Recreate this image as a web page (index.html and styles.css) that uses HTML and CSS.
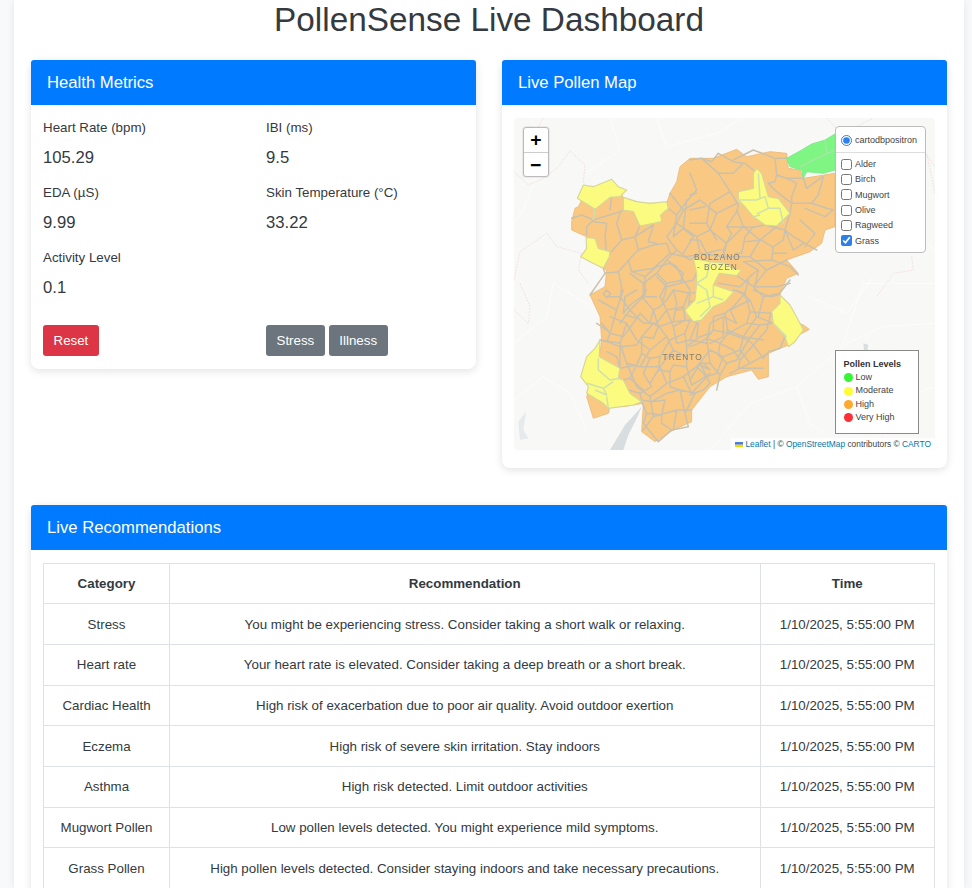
FILE: index.html
```html
<!DOCTYPE html>
<html lang="en">
<head>
<meta charset="utf-8">
<title>PollenSense Live Dashboard</title>
<link rel="stylesheet" href="styles.css">
</head>
<body>
<main class="page">
  <h1 class="title">PollenSense Live Dashboard</h1>
  <div class="top-row">
    <section class="card">
      <h2 class="card-header">Health Metrics</h2>
      <div class="metrics-body">
        <div class="metrics">
          <div class="metric"><div class="metric-label">Heart Rate (bpm)</div><div class="metric-value">105.29</div></div>
          <div class="metric"><div class="metric-label">IBI (ms)</div><div class="metric-value">9.5</div></div>
          <div class="metric"><div class="metric-label">EDA (µS)</div><div class="metric-value">9.99</div></div>
          <div class="metric"><div class="metric-label">Skin Temperature (°C)</div><div class="metric-value">33.22</div></div>
          <div class="metric"><div class="metric-label">Activity Level</div><div class="metric-value">0.1</div></div>
        </div>
        <div class="actions">
          <div><button class="btn btn-red" type="button">Reset</button></div>
          <div class="btn-group"><button class="btn btn-gray" type="button">Stress</button><button class="btn btn-gray" type="button">Illness</button></div>
        </div>
      </div>
    </section>
    <section class="card">
      <h2 class="card-header">Live Pollen Map</h2>
      <div class="map-body">
        <div class="map">
          <svg class="map-svg" viewBox="12 24 1263 996" aria-hidden="true">
            <g class="base-line">
              <path d="M60 24L110 120L40 300L12 340M230 190L330 120L300 24M440 24L470 110L620 70L700 24M12 700L110 620L130 520L260 600M12 870L100 800L180 850L230 960M600 1020L720 880L860 830L1010 700L1120 650L1275 640M860 830L900 940L1010 1020M1000 700L1060 520L1275 520M900 560L1010 610L1090 500M1130 1020L1120 880L1275 830M1060 230L1275 420"/>
            </g>
            <path class="water" d="M300 1020L345 945L395 890L385 915L355 975L340 1020Z M1060 700L1075 705L1072 722L1062 720Z"/>
            <path class="water-pale" d="M25 935L48 905L40 960L55 985L30 990Z"/>
            <g class="pink-line">
              <path d="M12 185L55 225L100 205L145 170L180 123L225 165L220 215L240 250M100 24L85 50M12 510L30 425L110 370L140 410L215 430L205 480L235 520M12 600L55 640L60 590L30 520M950 24L985 60L1040 50L1090 24M1275 170L1240 120L1200 95M1205 440L1210 480L1150 490L1100 560M1275 250L1250 130"/>
            </g>
            <path class="orange" d="M185 335L195 295L205 290L225 250L300 240L330 240L340 265L400 280L470 280L480 250L500 215L510 170L540 145L610 145L680 118L710 140L780 125L830 130L835 175L870 180L880 205L975 190L975 350L945 360L935 400L900 425L830 450L865 490L830 505L810 550L815 590L840 630L880 645L898 658L880 668L855 680L835 705L775 730L775 800L745 808L725 780L650 800L600 830L545 900L545 935L490 960L435 995L395 965L400 880L340 890L300 890L295 910L250 925L230 860L240 830L240 800L270 730L275 690L270 620L240 555L285 530L290 480L270 470L230 440L240 400L230 380L185 360Z"/>
            <g class="district">
              <g transform="translate(180 90)">
                <path d="M75 208L70 240L50 260L50 285M5 235L35 225L70 240L150 215L160 210M125 170L120 210M70 245L110 250L105 290L110 340M150 220L140 250L155 300L120 340M190 215L210 258L195 290L205 330M155 300L195 290L250 255L235 305L260 310M120 340L100 385L105 400L145 395L185 350L205 330L250 315L290 310L300 340L250 385L185 395L175 360M145 395L155 440L150 480M105 400L60 465M295 205L320 225L345 190L380 150L360 100M320 225L310 290L340 265L370 290L340 340M340 265L350 180M300 340L345 350L380 345M185 395L225 410L260 380L300 370L340 400L330 430L290 440L260 410M225 410L225 470M280 480L290 440M330 430L370 420L385 385M100 462L110 450L122 462L110 473Z"/>
              </g>
              <g transform="translate(540 90)">
                <path d="M0 60L35 55L85 100L120 155L60 190L50 250L80 300M120 155L145 195L140 215L110 260L125 280L100 330L105 350M35 55L65 65L85 40L130 65L160 70L130 100L85 100M130 60L190 30L255 55L260 105L290 115L320 130L305 170L305 190L260 155L235 130L255 125L260 105M190 90L165 70M260 55L290 55M290 115L340 115L350 145L390 115L400 110L385 165L365 190L305 190L300 220L285 270L310 290L380 330M345 205L405 230L430 210L410 205L365 190M330 240L375 280L345 320M285 270L310 330L340 310M190 260L165 290L155 340L135 340M110 260L190 262L225 255L285 270L280 300L250 320L245 360L160 365M165 305L215 300L245 320M250 340L290 340M245 360L300 380L325 405M205 390L195 440L260 440L300 430M85 430L150 440L185 405L205 390L160 365M0 165L20 160M0 250L50 250M0 210L45 200M0 300L30 300L50 340L85 330L100 330"/>
              </g>
              <g transform="translate(180 540)">
                <path d="M85 30L140 60L160 0M140 60L120 130L160 140L200 85L165 75M200 85L210 70L240 100L250 60L215 20L180 45L160 70M95 100L120 130L110 155L90 150M110 155L150 170L200 165L215 140L250 145L265 110L250 100L215 140M265 110L310 95L320 40L310 0L360 10L355 55L320 60M310 95L360 90L345 130L300 150L270 200L240 205L215 190L215 140M240 205L220 250L245 290L210 310L215 330L245 335L290 310L330 300L375 310L345 370L355 410L305 420L265 455L220 400L230 370L215 335M230 370L275 375L285 330L245 335M275 375L275 400L305 420M330 300L345 370M270 200L265 240L300 245L300 290L330 300M265 240L240 280M300 245L310 225L350 230L365 285L390 270L420 250M350 230L350 170L345 130M350 170L390 140L420 130M360 90L385 100L380 140M150 170L150 235L200 225L180 265L220 300M200 225L215 190M150 235L140 200L110 185M160 270L180 265M175 300L210 310M390 225L420 240L400 220M310 0L290 30L270 50L250 60M215 20L230 0M360 10L420 0M265 110L250 60M160 70L165 20L200 0"/>
              </g>
              <g transform="translate(540 510)">
                <path d="M0 65L90 55L130 30L165 40L175 0M165 40L180 95L245 100M180 95L170 130L115 160L105 100L130 80L165 40M105 100L70 110L70 150L115 160M170 130L210 135L175 180L115 160L90 190L50 175L70 150M245 130L210 135M260 130L285 170L270 205L235 215M175 180L190 195L150 240L130 210L90 190M175 180L140 240L110 250L85 225L90 190M110 250L90 285L60 250L50 175M150 240L145 265M50 175L25 190L0 200M60 250L30 250L60 310M30 250L0 300M90 285L80 330M190 195L220 235L235 215M190 195L230 150L240 110L245 100M190 30L240 50L265 45L300 0M0 345L40 330L60 310M145 265L220 265"/>
              </g>
              <path d="M440 490L470 520L450 560L470 600L440 640M470 520L520 510L540 540L520 590L470 600M520 510L500 470L470 450L440 490L400 520L400 560L440 560M400 520L360 490M400 560L360 600L400 640L440 640L470 680M360 600L330 560L290 560M330 640L360 600M520 590L525 630L490 650L470 600M490 650L500 700L540 690L560 640M540 690L590 700L600 640M600 640L640 620L680 640L660 600L720 570L740 620L700 680L650 660M640 620L640 680L600 700M720 570L680 540M740 620L790 640M700 680L760 690"/>
              <path d="M480 250L520 300L500 340L470 380L500 420L470 450M520 300L570 270L620 310L600 360L560 380L500 340M560 380L570 430L540 450L500 420M600 360L650 400L640 440L570 430M620 310L680 280M650 400L700 350L680 300M700 350L750 390L720 440L640 440M750 390L800 350M720 440L770 480L730 530L680 497M770 480L830 450M730 530L760 560L810 550M760 560L745 620"/>
              <path d="M300 620L350 640L330 700L270 690M290 660L260 640M330 700L350 760L390 770L420 720L380 690L350 640M420 720L470 680L490 720L450 770L390 770M450 770L470 820L420 860L380 830L350 760M470 820L520 800L560 770L590 800L545 850L520 800M490 720L530 740M560 770L600 720L640 740L620 790L590 800M640 740L690 720L720 760L660 790M690 720L700 680M720 760L775 730M420 860L430 920L500 900L545 900M430 920L400 960M500 900L490 960"/>
            </g>
            <path class="yellow" d="M202 265L220 225L250 230L305 208L325 230L350 240L330 260L300 262L255 298L235 285Z"/>
            <path class="yellow" d="M340 262L380 275L420 280L470 275L475 295L452 315L455 335L390 348L370 305L340 300Z"/>
            <path class="yellow" d="M228 382L255 385L265 415L300 425L298 440L280 475L240 455L212 440L230 415Z"/>
            <path class="yellow" d="M730 190L740 175L755 190L775 260L805 265L840 310L800 348L765 345L730 320L700 285L685 270L685 245L730 235Z"/>
            <path class="yellow" d="M550 445L600 455L650 460L665 475L695 480L680 497L628 490L610 525L672 545L645 575L610 590L575 630L550 635L530 610L525 600L555 570L560 520L560 490Z"/>
            <path class="yellow" d="M810 555L840 585L870 640L880 660L855 695L835 710L825 680L790 640L785 605L810 580Z"/>
            <path class="yellow" d="M270 690L268 740L330 775L325 805L340 810L360 850L395 875L370 885L295 895L280 880L230 850L235 830L212 800L230 740L255 715Z"/>
            <path class="green" d="M830 145L875 120L905 102L945 90L975 72L975 180L940 190L890 185L880 205L875 180L840 170Z"/>
            <g class="green-line">
              <path d="M870 170L920 145L975 120M945 90L950 130"/>
            </g>
            <g class="yellow-line">
              <path d="M685 270L740 270L765 260L775 295L740 312M775 295L810 295L820 340M745 190L750 265M730 320L750 315"/>
              <path d="M560 520L590 540L600 590L570 620M610 525L610 560M560 580L610 560L640 570M600 455L590 500L560 520"/>
              <path d="M265 745L265 780L300 810L330 805M230 820L280 835L310 815M280 835L290 855L255 840M290 860L295 895"/>
              <path d="M255 298L250 330M790 640L830 680"/>
            </g>
            <text class="place" x="622" y="450">BOLZANO</text>
            <text class="place" x="622" y="480">- BOZEN</text>
            <text class="place" x="518" y="749">TRENTO</text>
          </svg>

          <div class="zoom-control">
            <span class="zoom-btn">+</span>
            <span class="zoom-btn">−</span>
          </div>

          <form class="layers">
            <label class="layer-row base-row"><input type="radio" name="base" checked><span>cartodbpositron</span></label>
            <div class="layers-sep"></div>
            <label class="layer-row"><input type="checkbox"><span>Alder</span></label>
            <label class="layer-row"><input type="checkbox"><span>Birch</span></label>
            <label class="layer-row"><input type="checkbox"><span>Mugwort</span></label>
            <label class="layer-row"><input type="checkbox"><span>Olive</span></label>
            <label class="layer-row"><input type="checkbox"><span>Ragweed</span></label>
            <label class="layer-row"><input type="checkbox" checked><span>Grass</span></label>
          </form>

          <div class="legend">
            <div class="legend-title">Pollen Levels</div>
            <div class="legend-row"><i class="dot dot-low"></i>Low</div>
            <div class="legend-row"><i class="dot dot-mod"></i>Moderate</div>
            <div class="legend-row"><i class="dot dot-high"></i>High</div>
            <div class="legend-row"><i class="dot dot-vhigh"></i>Very High</div>
          </div>

          <div class="attribution">
            <svg class="flag" viewBox="0 0 12 8" aria-hidden="true"><path class="flag-blue" d="M0 0h12v4H0z"/><path class="flag-yellow" d="M0 4h12v4H0z"/></svg>
            <a href="#">Leaflet</a> | © <a href="#">OpenStreetMap</a> contributors © <a href="#">CARTO</a>
          </div>
        </div>
      </div>
    </section>
  </div>

  <section class="card rec-card">
    <h2 class="card-header">Live Recommendations</h2>
    <div class="rec-body">
      <table class="rec-table">
        <thead>
          <tr><th class="col-cat">Category</th><th class="col-rec">Recommendation</th><th class="col-time">Time</th></tr>
        </thead>
        <tbody>
          <tr><td>Stress</td><td>You might be experiencing stress. Consider taking a short walk or relaxing.</td><td>1/10/2025, 5:55:00 PM</td></tr>
          <tr><td>Heart rate</td><td>Your heart rate is elevated. Consider taking a deep breath or a short break.</td><td>1/10/2025, 5:55:00 PM</td></tr>
          <tr><td>Cardiac Health</td><td>High risk of exacerbation due to poor air quality. Avoid outdoor exertion</td><td>1/10/2025, 5:55:00 PM</td></tr>
          <tr><td>Eczema</td><td>High risk of severe skin irritation. Stay indoors</td><td>1/10/2025, 5:55:00 PM</td></tr>
          <tr><td>Asthma</td><td>High risk detected. Limit outdoor activities</td><td>1/10/2025, 5:55:00 PM</td></tr>
          <tr><td>Mugwort Pollen</td><td>Low pollen levels detected. You might experience mild symptoms.</td><td>1/10/2025, 5:55:00 PM</td></tr>
          <tr><td>Grass Pollen</td><td>High pollen levels detected. Consider staying indoors and take necessary precautions.</td><td>1/10/2025, 5:55:00 PM</td></tr>
        </tbody>
      </table>
    </div>
  </section>
</main>
</body>
</html>
```
FILE: styles.css
```css
* { box-sizing: border-box; }
html, body { margin: 0; height: 888px; overflow: hidden; }
body {
  background: #f8f9fa;
  color: #343a40;
  font-family: "Liberation Sans", Arial, sans-serif;
  font-size: 13.33px;
}
.page {
  width: 950px;
  height: 888px;
  margin-left: 14px;
  padding: 0 17px;
  background: #fff;
  box-shadow: 0 0 8px rgba(0, 0, 0, .08);
  overflow: hidden;
}
.title {
  margin: 0;
  height: 60px;
  font-size: 33.33px;
  font-weight: 400;
  line-height: 40px;
  text-align: center;
}
.top-row { display: flex; justify-content: space-between; align-items: flex-start; }
.top-row > .card { width: 445px; }
.card {
  background: #fff;
  border-radius: 8px;
  box-shadow: 0 2px 8px rgba(0, 0, 0, .12);
}
.card-header {
  margin: 0;
  height: 45px;
  padding: 0 16px;
  background: #007bff;
  color: #fff;
  border-radius: 3px 3px 0 0;
  font-size: 16.67px;
  font-weight: 400;
  line-height: 45px;
}
.metrics-body { padding: 12.5px 12px 13px; }
.metrics { display: grid; grid-template-columns: 223px 1fr; }
.metric { height: 65px; }
.metric-label { font-size: 13.33px; line-height: 20px; }
.metric-value { margin-top: 7px; font-size: 16.67px; line-height: 26px; }
.actions { display: grid; grid-template-columns: 223px 1fr; margin-top: 12.5px; }
.btn-group { display: flex; gap: 4px; }
.btn {
  height: 31px;
  padding: 0 10.5px;
  border: 0;
  border-radius: 3px;
  color: #fff;
  font: 13.33px/31px "Liberation Sans", Arial, sans-serif;
}
.btn-red { background: #dc3545; }
.btn-gray { background: #6c757d; }

.map-body { padding: 13px 12px 18px; }
.map {
  position: relative;
  height: 332px;
  background: #f8f8f7;
  border-radius: 4px;
  overflow: hidden;
}
.map-svg { display: block; width: 421px; height: 332px; filter: blur(.45px); }
.base-line path { fill: none; stroke: #fff; stroke-width: 2; }
.pink-line path { fill: none; stroke: #efd9de; stroke-width: 2.5; stroke-dasharray: 5 4; }
.water { fill: #d8dddf; }
.water-pale { fill: #e6eaec; }
.orange { fill: #f9c984; stroke: #e9b878; stroke-width: 2.5; stroke-linejoin: round; }
.yellow { fill: #fbfb80; stroke: #d6d69a; stroke-width: 3.5; stroke-linejoin: round; }
.green { fill: #7ff684; stroke: #78e888; stroke-width: 2.5; stroke-linejoin: round; }
.green-line path { fill: none; stroke: #a6e6a6; stroke-width: 4; }
.yellow-line path { fill: none; stroke: #cfe0ae; stroke-width: 4.5; stroke-linejoin: round; }
.district path { fill: none; stroke: #c9c1ae; stroke-width: 4.5; stroke-linejoin: round; stroke-linecap: round; }
.place {
  fill: #7f7c72;
  font-family: "Liberation Sans", sans-serif;
  font-size: 25px;
  letter-spacing: 3px;
  text-anchor: middle;
}

.zoom-control {
  position: absolute;
  top: 9px;
  left: 9px;
  width: 26px;
  height: 50px;
  display: flex;
  flex-direction: column;
  background: #fff;
  border: 1px solid #bbb;
  border-radius: 3px;
  box-shadow: 0 0 0 1px rgba(0, 0, 0, .06);
}
.zoom-btn {
  height: 24px;
  color: #000;
  font: 700 18px/24px "DejaVu Sans Mono", monospace;
  text-align: center;
}
.zoom-btn + .zoom-btn { border-top: 1px solid #ccc; }

.layers {
  position: absolute;
  top: 8px;
  left: 321px;
  width: 91px;
  height: 127px;
  padding: 5px;
  background: #fff;
  border: 1px solid #bdbdbd;
  border-radius: 4px;
  color: #444;
  font-size: 9px;
}
.layer-row { display: flex; align-items: center; gap: 3px; height: 15.3px; }
.layer-row input { width: 11px; height: 11px; margin: 0; accent-color: #2f7fe8; }
.base-row { height: 16px; }
.layers-sep { margin: 4px -5px 3.5px; border-top: 1px solid #ddd; }

.legend {
  position: absolute;
  top: 232px;
  left: 321px;
  width: 84px;
  height: 84px;
  padding: 7px 0 0 7.5px;
  background: #fff;
  border: 1.5px solid #8a8a8a;
  color: #444;
  font-size: 9px;
  line-height: 13.2px;
}
.legend-title { font-weight: 700; color: #333; }
.legend-row { display: flex; align-items: center; gap: 3px; }
.dot { width: 9px; height: 9px; border-radius: 50%; }
.dot-low { background: #35f535; }
.dot-mod { background: #fdfd35; }
.dot-high { background: #fdaa30; }
.dot-vhigh { background: #fb3038; }

.attribution {
  position: absolute;
  right: 0;
  bottom: 0;
  height: 12px;
  padding: 0 4px;
  background: rgba(255, 255, 255, .8);
  color: #444;
  font-size: 8.4px;
  line-height: 12px;
  white-space: nowrap;
}
.attribution a { color: #0078a8; text-decoration: none; }
.flag { display: inline-block; width: 8px; height: 5.5px; }
.flag-blue { fill: #4c7be1; }
.flag-yellow { fill: #ffd500; }

.rec-card { margin-top: 37px; }
.rec-body { padding: 12.8px 12px; }
.rec-table {
  width: 892px;
  table-layout: fixed;
  border-collapse: collapse;
  font-size: 13.33px;
}
.col-cat { width: 126px; }
.col-time { width: 174.5px; }
.rec-table th, .rec-table td {
  height: 40.67px;
  padding: 0 8px;
  border: 1px solid #dee2e6;
  text-align: center;
  vertical-align: middle;
}
.rec-table th { font-weight: 700; }
```
